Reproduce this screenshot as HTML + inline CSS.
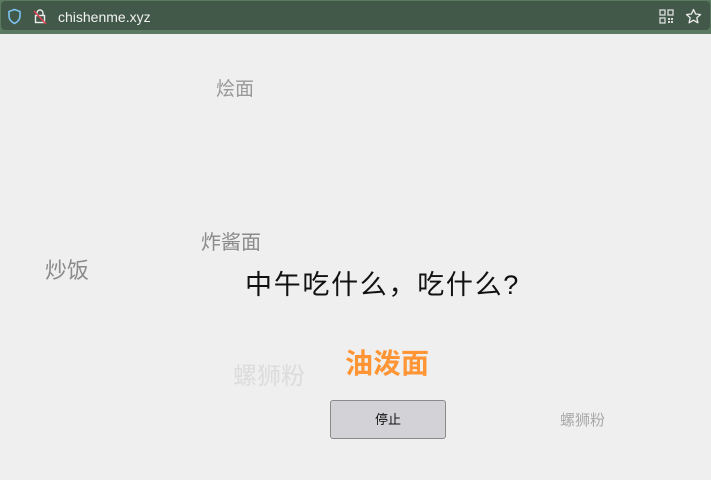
<!DOCTYPE html>
<html><head><meta charset="utf-8"><style>
body{margin:0;width:711px;height:480px;overflow:hidden;background:#efefef;font-family:"Liberation Sans","Noto Sans CJK SC",sans-serif;position:relative}
.bar{position:absolute;left:0;top:0;width:711px;height:34px;background:#5c7a62}
.url{position:absolute;left:1px;top:1px;width:709px;height:29px;background:#425949;border-radius:4px}
.t{position:absolute;white-space:nowrap;line-height:1}
</style></head><body>
<div class="bar"><div class="url"></div></div>
<svg style="position:absolute;left:7px;top:8px" width="15" height="17" viewBox="0 0 15 17"><path d="M7.5 1.5 L13 3.5 V8 C13 11.5 10.5 14 7.5 15.5 C4.5 14 2 11.5 2 8 V3.5 Z" fill="none" stroke="#7cc3f0" stroke-width="1.6"/></svg>
<svg style="position:absolute;left:33px;top:8px" width="14" height="17" viewBox="0 0 14 17"><path d="M4 7 V5 a3 3 0 0 1 6 0 V7" fill="none" stroke="#eee" stroke-width="1.4"/><rect x="2.5" y="7.5" width="9" height="7" fill="none" stroke="#eee" stroke-width="1.4"/><path d="M1 3 L13 16" stroke="#e04050" stroke-width="1.6"/></svg>
<div class="t" style="left:58px;top:10px;font-size:14px;color:#f2f2f2">chishenme.xyz</div>
<svg style="position:absolute;left:659px;top:9px" width="15" height="15" viewBox="0 0 15 15" fill="#ddd"><rect x="1" y="1" width="5" height="5" fill="none" stroke="#ddd" stroke-width="1.3"/><rect x="9" y="1" width="5" height="5" fill="none" stroke="#ddd" stroke-width="1.3"/><rect x="1" y="9" width="5" height="5" fill="none" stroke="#ddd" stroke-width="1.3"/><rect x="9" y="9" width="2" height="2"/><rect x="12" y="12" width="2" height="2"/><rect x="12" y="9" width="2" height="2"/><rect x="9" y="12" width="2" height="2"/></svg>
<svg style="position:absolute;left:685px;top:8px" width="17" height="17" viewBox="0 0 17 17"><path d="M8.5 1.5 L10.6 6 L15.5 6.5 L11.8 9.8 L12.9 14.8 L8.5 12.2 L4.1 14.8 L5.2 9.8 L1.5 6.5 L6.4 6 Z" fill="none" stroke="#eee" stroke-width="1.3" stroke-linejoin="round"/></svg>
<div class="t" style="left:216px;top:80px;font-size:19px;color:#999">烩面</div>
<div class="t" style="left:201px;top:233px;font-size:20px;color:#8a8a8a">炸酱面</div>
<div class="t" style="left:45px;top:260px;font-size:22px;color:#8a8a8a">炒饭</div>
<div class="t" style="left:245px;top:272px;font-size:27px;letter-spacing:1.7px;color:#111">中午吃什么，吃什么?</div>
<div class="t" style="left:345px;top:350px;font-size:28px;font-weight:bold;color:#ff9535">油泼面</div>
<div class="t" style="left:233px;top:365px;font-size:24px;color:#dcdcdc">螺狮粉</div>
<div class="t" style="left:560px;top:413px;font-size:15px;color:#aaa">螺狮粉</div>
<div style="position:absolute;left:330px;top:400px;width:116px;height:39px;background:#d2d2d7;border:1px solid #8a8a8a;border-radius:3px;box-sizing:border-box;text-align:center;line-height:37px;font-size:13px;color:#111">停止</div>
</body></html>
